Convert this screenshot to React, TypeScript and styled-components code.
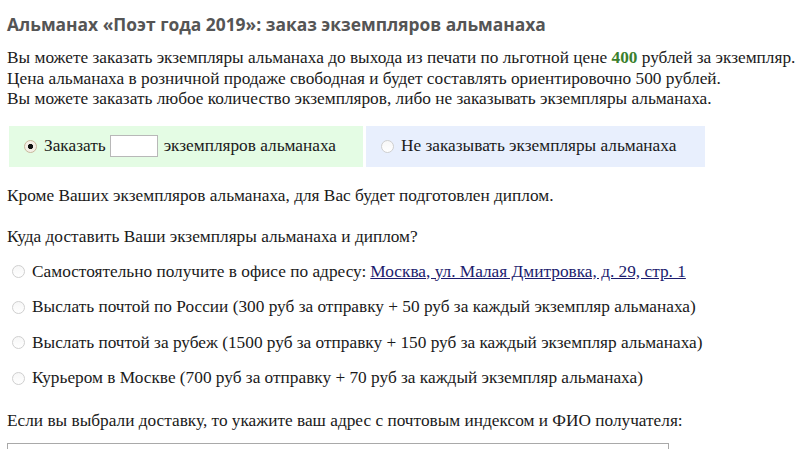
import React, { useState } from 'react'
import styled, { createGlobalStyle } from 'styled-components'

const GlobalStyle = createGlobalStyle`
  html, body {
    margin: 0;
    padding: 0;
    background: #fff;
  }
  body {
    font-family: 'Liberation Serif', 'Times New Roman', serif;
    font-size: 17.3px;
    color: #1a1a1a;
  }
`

const Page = styled.div`
  padding: 0 7px;
  width: 797px;
  height: 449px;
  overflow: hidden;
`

const Title = styled.h2`
  margin: 0;
  padding-top: 12px;
  font-family: 'Open Sans', 'Liberation Sans', sans-serif;
  font-weight: 700;
  font-size: 17.4px;
  line-height: 24px;
  color: #555;
`

const Intro = styled.p`
  margin: 12px 0 0;
  line-height: 20.5px;
  white-space: nowrap;
`

const Price = styled.b`
  color: #3b7f2e;
`

const Choices = styled.div`
  display: flex;
  gap: 3px;
  margin: 16px 0 0 2px;
`

const Choice = styled.label<{ $tone: 'green' | 'blue' }>`
  display: flex;
  align-items: center;
  gap: 7px;
  height: 41px;
  padding: 0 15px;
  box-sizing: border-box;
  background: ${(p) => (p.$tone === 'green' ? '#e4fce4' : '#e8effd')};
  cursor: pointer;
`

const GreenChoice = styled(Choice)`
  width: 354px;
`

const BlueChoice = styled(Choice)`
  width: 339px;
`

const Radio = styled.span<{ $on?: boolean }>`
  display: inline-block;
  flex: none;
  width: 11px;
  height: 11px;
  border-radius: 50%;
  border: 1px solid ${(p) => (p.$on ? '#c9b79c' : '#cfcfcf')};
  background: ${(p) =>
    p.$on
      ? 'radial-gradient(circle, #111 0 2.4px, #f4efe6 2.9px)'
      : 'linear-gradient(#f7f7f7, #fff)'};
`

const Count = styled.input`
  width: 48px;
  height: 22px;
  box-sizing: border-box;
  border: 1px solid #b8b8b8;
  margin: 0 -1px 0 -3px;
  background: #fff;
  font: inherit;
`

const Note = styled.p<{ $top: number }>`
  margin: ${(p) => p.$top}px 0 0;
  line-height: 20px;
`

const Options = styled.div`
  display: flex;
  flex-direction: column;
  gap: 15.5px;
  margin-top: 15px;
  padding-left: 5px;
`

const Option = styled.label`
  display: flex;
  align-items: center;
  gap: 7px;
  height: 20px;
  cursor: pointer;
`

const Address = styled.a`
  color: #1c1c6e;
  text-decoration: underline;
  margin-left: 4px;
`

const AddressBox = styled.textarea`
  display: block;
  margin-top: 12px;
  width: 662px;
  height: 60px;
  box-sizing: border-box;
  border: 1px solid #a9a9a9;
  resize: none;
`

const deliveries = [
  'Выслать почтой по России (300 руб за отправку + 50 руб за каждый экземпляр альманаха)',
  'Выслать почтой за рубеж (1500 руб за отправку + 150 руб за каждый экземпляр альманаха)',
  'Курьером в Москве (700 руб за отправку + 70 руб за каждый экземпляр альманаха)',
]

export default function App() {
  const [order, setOrder] = useState(true)
  const [delivery, setDelivery] = useState(-1)

  return (
    <Page>
      <GlobalStyle />
      <Title>Альманах «Поэт года 2019»: заказ экземпляров альманаха</Title>
      <Intro>
        Вы можете заказать экземпляры альманаха до выхода из печати по льготной цене <Price>400</Price> рублей за экземпляр.
        <br />
        Цена альманаха в розничной продаже свободная и будет составлять ориентировочно 500 рублей.
        <br />
        Вы можете заказать любое количество экземпляров, либо не заказывать экземпляры альманаха.
      </Intro>
      <Choices>
        <GreenChoice $tone="green" onClick={() => setOrder(true)}>
          <Radio $on={order} />
          Заказать <Count /> экземпляров альманаха
        </GreenChoice>
        <BlueChoice $tone="blue" onClick={() => setOrder(false)}>
          <Radio $on={!order} />
          Не заказывать экземпляры альманаха
        </BlueChoice>
      </Choices>
      <Note $top={19}>Кроме Ваших экземпляров альманаха, для Вас будет подготовлен диплом.</Note>
      <Note $top={21}>Куда доставить Ваши экземпляры альманаха и диплом?</Note>
      <Options>
        <Option onClick={() => setDelivery(0)}>
          <Radio $on={delivery === 0} />
          <span>
            Самостоятельно получите в офисе по адресу:
            <Address href="#">Москва, ул. Малая Дмитровка, д. 29, стр. 1</Address>
          </span>
        </Option>
        {deliveries.map((text, i) => (
          <Option key={text} onClick={() => setDelivery(i + 1)}>
            <Radio $on={delivery === i + 1} />
            {text}
          </Option>
        ))}
      </Options>
      <Note $top={23}>Если вы выбрали доставку, то укажите ваш адрес с почтовым индексом и ФИО получателя:</Note>
      <AddressBox />
    </Page>
  )
}
